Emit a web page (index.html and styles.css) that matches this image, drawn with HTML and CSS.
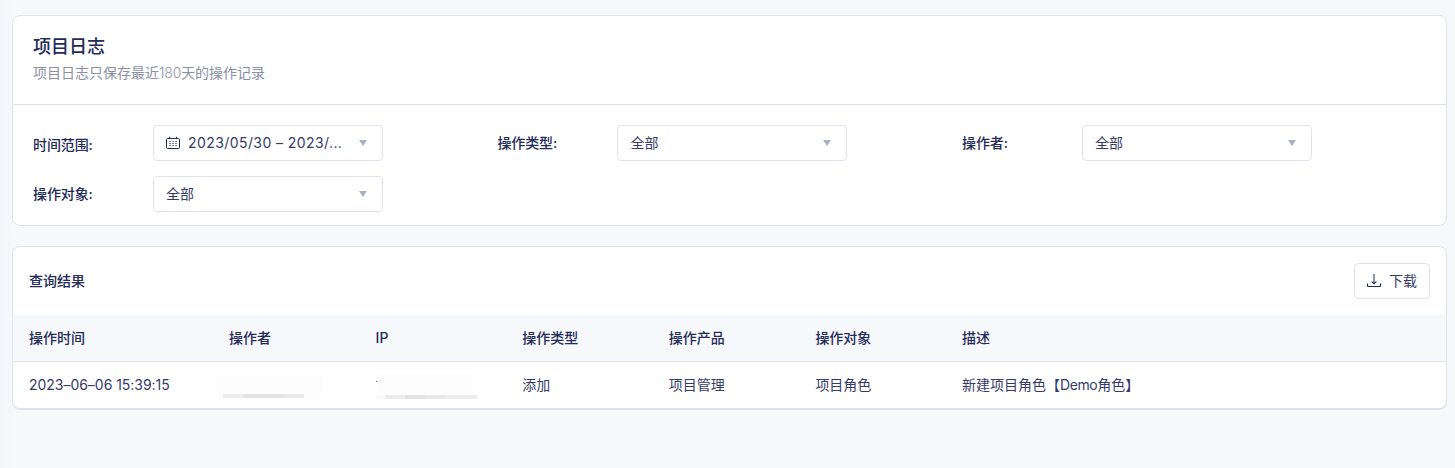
FILE: index.html
```html
<!DOCTYPE html>
<html lang="zh-CN">
<head>
<meta charset="utf-8">
<title>项目日志</title>
<link rel="stylesheet" href="styles.css">
</head>
<body>
<section class="card filters">
  <header class="card-header">
    <h1 class="title">项目日志</h1>
    <p class="subtitle">项目日志只保存最近<span class="days">180</span>天的操作记录</p>
  </header>
  <div class="filter-grid">
    <div class="field"><span class="label label-low">时间范围:</span>
      <div class="select">
        <svg class="calendar" width="16" height="14" viewBox="0 0 16 14" fill="none" stroke="currentColor"><rect x="1.5" y="2.5" width="13" height="10" rx="1"/><path d="M4.5 0.8V3M11.5 0.8V3"/><path d="M4 5.5h2M7 5.5h2M10 5.5h2M4 7.5h2M7 7.5h2M10 7.5h2M4 9.5h2M7 9.5h2M10 9.5h2" stroke-opacity=".6"/></svg>
        <span class="value date">2023/05/30 – 2023/...</span><i class="arrow"></i>
      </div></div>
    <div class="field"><span class="label">操作类型:</span><div class="select"><span class="value">全部</span><i class="arrow"></i></div></div>
    <div class="field"><span class="label">操作者:</span><div class="select"><span class="value">全部</span><i class="arrow"></i></div></div>
    <div class="field"><span class="label">操作对象:</span><div class="select"><span class="value">全部</span><i class="arrow"></i></div></div>
  </div>
</section>
<section class="card results">
  <div class="toolbar">
    <h2 class="results-title">查询结果</h2>
    <button class="download" type="button">
      <svg width="16" height="16" viewBox="0 0 16 16" fill="none" stroke="currentColor"><path d="M8 1v9.5"/><path d="M5.6 8.6L8 10.8l2.4-2.2" stroke-width="1.2"/><path d="M1.5 10.5v2.2q0 .8.8.8h11.4q.8 0 .8-.8v-2.2" stroke-width="1.2"/></svg>
      <span>下载</span>
    </button>
  </div>
  <div class="row head"><span>操作时间</span><span>操作者</span><span>IP</span><span>操作类型</span><span>操作产品</span><span>操作对象</span><span>描述</span></div>
  <div class="row body">
    <span class="time">2023–06–06 15:39:15</span>
    <span class="masked masked-user"><i class="bar"></i></span>
    <span class="masked masked-ip"><i class="bar"></i></span>
    <span>添加</span><span>项目管理</span><span>项目角色</span><span>新建项目角色【<span class="latin">Demo</span>角色】</span>
  </div>
</section>
</body>
</html>
```
FILE: styles.css
```css
* { box-sizing: border-box; }
body {
  margin: 0;
  min-height: 468px;
  padding: 15px 8px 0 12px;
  background: linear-gradient(90deg, #f3f5fa 0, #f7f8fc 14px);
  color: #232b58;
  font: 400 14px/20px Inter, "Noto Sans CJK SC", sans-serif;
}
h1, h2, p { margin: 0; }
svg { display: block; flex: none; }
.card {
  background: #fff;
  border: 1px solid #dfe3ee;
  border-radius: 8px;
  overflow: hidden;
}
.filters { height: 211px; margin-bottom: 20px; }
.card-header {
  height: 89px;
  padding: 17px 20px 0;
  border-bottom: 1px solid #dfe1ee;
}
.title { font-size: 18px; line-height: 28px; font-weight: 500; }
.subtitle { margin-top: 2px; color: #8b8fa6; }
.days { letter-spacing: -0.2px; font-weight: 300; }
.filter-grid {
  display: grid;
  grid-template-columns: 464.4px 464.6px 464px;
  row-gap: 15px;
  padding: 20px 0 0 20px;
}
.field { display: flex; align-items: center; }
.label { width: 120px; font-weight: 500; letter-spacing: -0.1px; }
.label-low { padding-top: 3px; }
.select {
  display: flex;
  align-items: center;
  width: 230px;
  height: 36px;
  padding: 0 15px 0 12px;
  border: 1px solid #dfe3ee;
  border-radius: 4px;
  background: #fff;
}
.value { flex: 1; white-space: nowrap; color: #343b66; }
.date { letter-spacing: 0.42px; }
.calendar { margin: 0 7px 0 -1px; }
.arrow {
  border: 4.5px solid transparent;
  border-top: 6px solid #a9aec2;
  border-bottom: 0;
}
.results { height: 164px; border-bottom-width: 2px; }
.toolbar {
  display: flex;
  align-items: center;
  justify-content: space-between;
  height: 68px;
  padding: 0 16px;
}
.results-title { font-size: 14px; line-height: 20px; font-weight: 500; }
.download {
  display: flex;
  align-items: center;
  gap: 7px;
  width: 76px;
  height: 36px;
  padding: 0 0 0 11px;
  border: 1px solid #dfe1ee;
  border-radius: 4px;
  background: #fff;
  color: inherit;
  font: inherit;
}
.download span { color: #343b66; }
.row {
  display: grid;
  grid-template-columns: 200px repeat(5, 146.6px) 1fr;
  align-items: center;
  height: 46px;
  padding-left: 16px;
}
.head {
  height: 47px;
  background: #f7f8fc;
  border-bottom: 1px solid #dfe3ee;
  font-weight: 500;
}
.body { color: #343b66; }
.time { letter-spacing: -0.03px; }
.latin { letter-spacing: -0.4px; }
.masked { position: relative; display: flex; align-items: flex-end; background: #fdfdfd; }
.masked .bar { height: 4px; }
.masked-user { width: 107px; height: 22px; margin: 3px 0 0 -14px; }
.masked-user .bar {
  width: 81px;
  margin-left: 8px;
  background: linear-gradient(90deg, #ececef 0 20px, #e3e3e7 20px 61px, #e9e9ec 61px);
}
.masked-ip { width: 100px; height: 25px; margin: 2px 0 0 1px; }
.masked-ip::before {
  content: "";
  position: absolute;
  left: -1px;
  top: 7px;
  width: 1px;
  height: 1px;
  background: #6b708d;
}
.masked-ip .bar {
  width: 100px;
  background: linear-gradient(90deg, #f7f7f7 0 8px, #ececee 8px 28px, #e1e3e6 28px 48px, #e7e7e9 48px 68px, #ececee 68px);
}
```
